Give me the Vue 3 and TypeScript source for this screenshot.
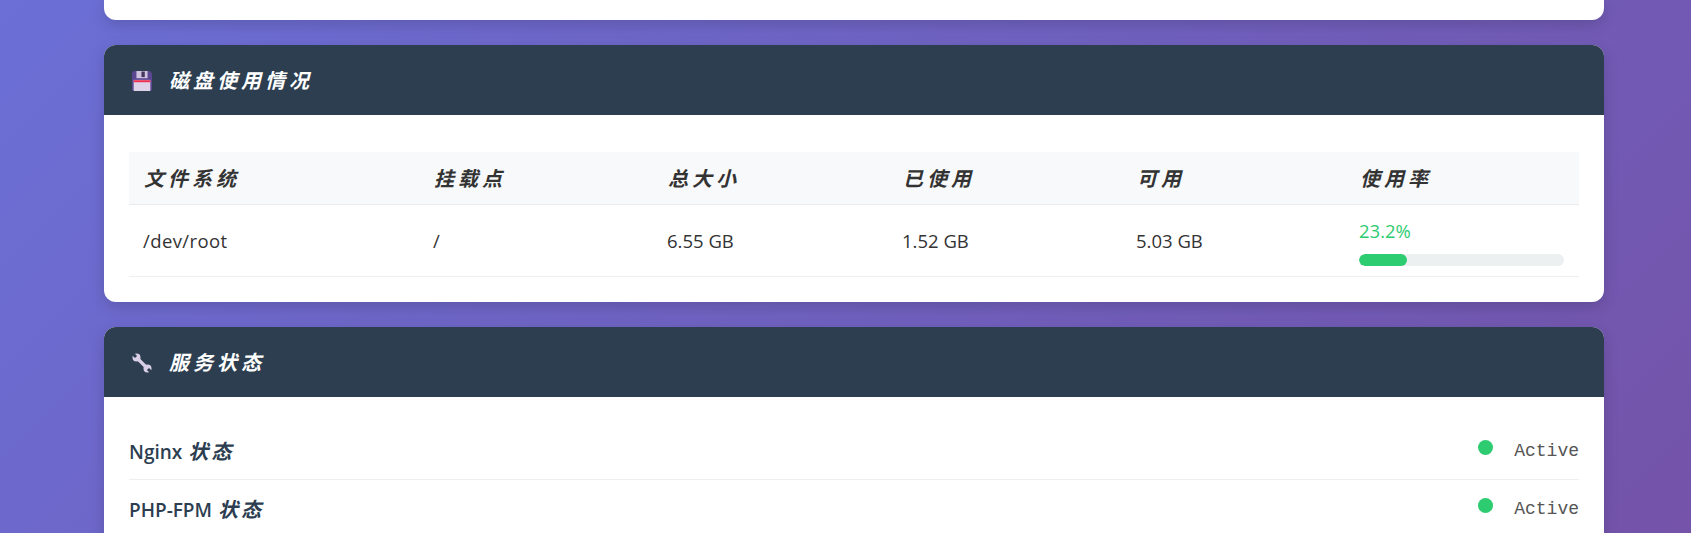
<template>
  <div class="page">
    <div class="card stub"></div>

    <section class="card">
      <h2 class="card-header">
        <svg class="icon" viewBox="1 1 18 18">
          <path d="M1 2.500 2.500 1H17l2 2v14.500L17.500 19h-15L1 17.500z" fill="#5b4692" />
          <rect x="5" y="1" width="10" height="6.500" fill="#cfc2de" />
          <rect x="9.500" y="1.500" width="3" height="5" fill="#43365f" />
          <rect x="2.500" y="9" width="15" height="10" fill="#dfd2e8" />
          <rect x="2.500" y="9.300" width="15" height="1.800" fill="#ef2f4f" />
        </svg>
        <span class="title">磁盘使用情况</span>
      </h2>
      <div class="card-body">
        <table class="disk-table">
          <colgroup>
            <col v-for="w in colWidths" :key="w" :style="{ width: w + 'px' }" />
          </colgroup>
          <thead>
            <tr>
              <th v-for="h in headers" :key="h"><span class="th-text">{{ h }}</span></th>
            </tr>
          </thead>
          <tbody>
            <tr v-for="d in disks" :key="d.fs">
              <td class="fs">{{ d.fs }}</td>
              <td>{{ d.mount }}</td>
              <td>{{ d.total }}</td>
              <td>{{ d.used }}</td>
              <td>{{ d.free }}</td>
              <td>
                <div class="pct">{{ d.pct }}%</div>
                <div class="bar"><div class="bar-fill" :style="{ width: d.pct + '%' }"></div></div>
              </td>
            </tr>
          </tbody>
        </table>
      </div>
    </section>

    <section class="card">
      <h2 class="card-header">
        <svg class="icon" viewBox="0 0 20 20">
          <path d="M4.500 4.500 15.500 15.500" stroke="#d9cfe6" stroke-width="3.200" />
          <circle cx="4.500" cy="4.500" r="4" fill="#d9cfe6" />
          <circle cx="15.500" cy="15.500" r="4" fill="#d9cfe6" />
          <path d="M.500 .500 4 4M19.500 19.500 16 16" stroke="#2c3e50" stroke-width="3" />
        </svg>
        <span class="title">服务状态</span>
      </h2>
      <div class="card-body services">
        <div v-for="s in services" :key="s.name" class="service">
          <span class="service-name">{{ s.name }} <span class="cjk">状态</span></span>
          <span class="service-state">
            <i class="dot"></i>
            <code>{{ s.state }}</code>
          </span>
        </div>
      </div>
    </section>
  </div>
</template>

<script setup lang="ts">
interface Disk {
  fs: string
  mount: string
  total: string
  used: string
  free: string
  pct: number
}

const headers = ['文件系统', '挂载点', '总大小', '已使用', '可用', '使用率']
const colWidths = [290, 234, 235, 234, 223, 234]

const disks: Disk[] = [
  { fs: '/dev/root', mount: '/', total: '6.55 GB', used: '1.52 GB', free: '5.03 GB', pct: 23.2 }
]

const services = [
  { name: 'Nginx', state: 'Active' },
  { name: 'PHP-FPM', state: 'Active' }
]
</script>

<style scoped>
.page {
  height: 533px;
  overflow: hidden;
  box-sizing: border-box;
  padding: 0 87px 0 104px;
  background: linear-gradient(135deg, #6b6fd6 0%, #7453a9 100%);
  font-family: "Open Sans", "Noto Sans CJK SC", sans-serif;
  color: #2c3e50;
}

.card {
  background: #fff;
  border-radius: 12px;
  margin-bottom: 25px;
  box-shadow: 0 5px 15px rgba(0, 0, 0, 0.15);
  overflow: hidden;
}

.stub {
  height: 20px;
  border-radius: 0 0 12px 12px;
}

.card-header {
  height: 70px;
  margin: 0;
  padding: 0 25px 0 28px;
  display: flex;
  align-items: center;
  gap: 17px;
  background: #2c3e50;
  color: #fff;
  font-size: 20px;
  font-weight: 700;
  font-style: italic;
  letter-spacing: 4px;
  font-family: "Noto Sans CJK SC", sans-serif;
}

.title {
  margin-top: -2px;
}

.icon {
  width: 20px;
  height: 20px;
  flex: none;
  margin-top: 2px;
}

.card-body {
  padding: 37px 25px 25px;
}

.disk-table {
  width: 100%;
  table-layout: fixed;
  border-collapse: collapse;
  color: #333;
  font-size: 18.500px;
}

.disk-table th {
  height: 52px;
  padding: 0 15px;
  background: #f8f9fa;
  border-bottom: 1px solid #e9ecef;
  text-align: left;
  font-family: "Noto Sans CJK SC", sans-serif;
  font-size: 20px;
  font-weight: 700;
  font-style: italic;
  letter-spacing: 4px;
}

.th-text {
  display: block;
  margin-top: -2px;
}

.disk-table td {
  height: 71px;
  padding: 0 15px 0 14px;
  border-bottom: 1px solid #ecf0f1;
}

.disk-table .fs {
  letter-spacing: 0.400px;
}

.pct {
  color: #2ecc71;
  line-height: 32px;
  margin-bottom: 7px;
}

.bar {
  width: 205px;
  height: 12px;
  border-radius: 6px;
  background: #ecf0f1;
  overflow: hidden;
}

.bar-fill {
  height: 100%;
  border-radius: 6px;
  background: #2ecc71;
}

.services {
  padding: 25px 25px 25px;
}

.service {
  height: 57px;
  display: flex;
  align-items: center;
  justify-content: space-between;
  border-bottom: 1px solid #ecf0f1;
  font-size: 19px;
}

.service-name {
  font-weight: 600;
}

.cjk {
  font-family: "Noto Sans CJK SC", sans-serif;
  font-size: 20px;
  font-weight: 700;
  font-style: italic;
  letter-spacing: 3px;
  margin-left: 1px;
}

.service-state {
  display: flex;
  align-items: center;
  gap: 21px;
}

.dot {
  width: 15px;
  height: 15px;
  border-radius: 50%;
  background: #2ecc71;
  margin-top: -6px;
}

code {
  font-family: "Liberation Mono", monospace;
  font-size: 18px;
  color: #555;
}
</style>

<style>
html, body {
  margin: 0;
  overflow: hidden;
}
</style>
